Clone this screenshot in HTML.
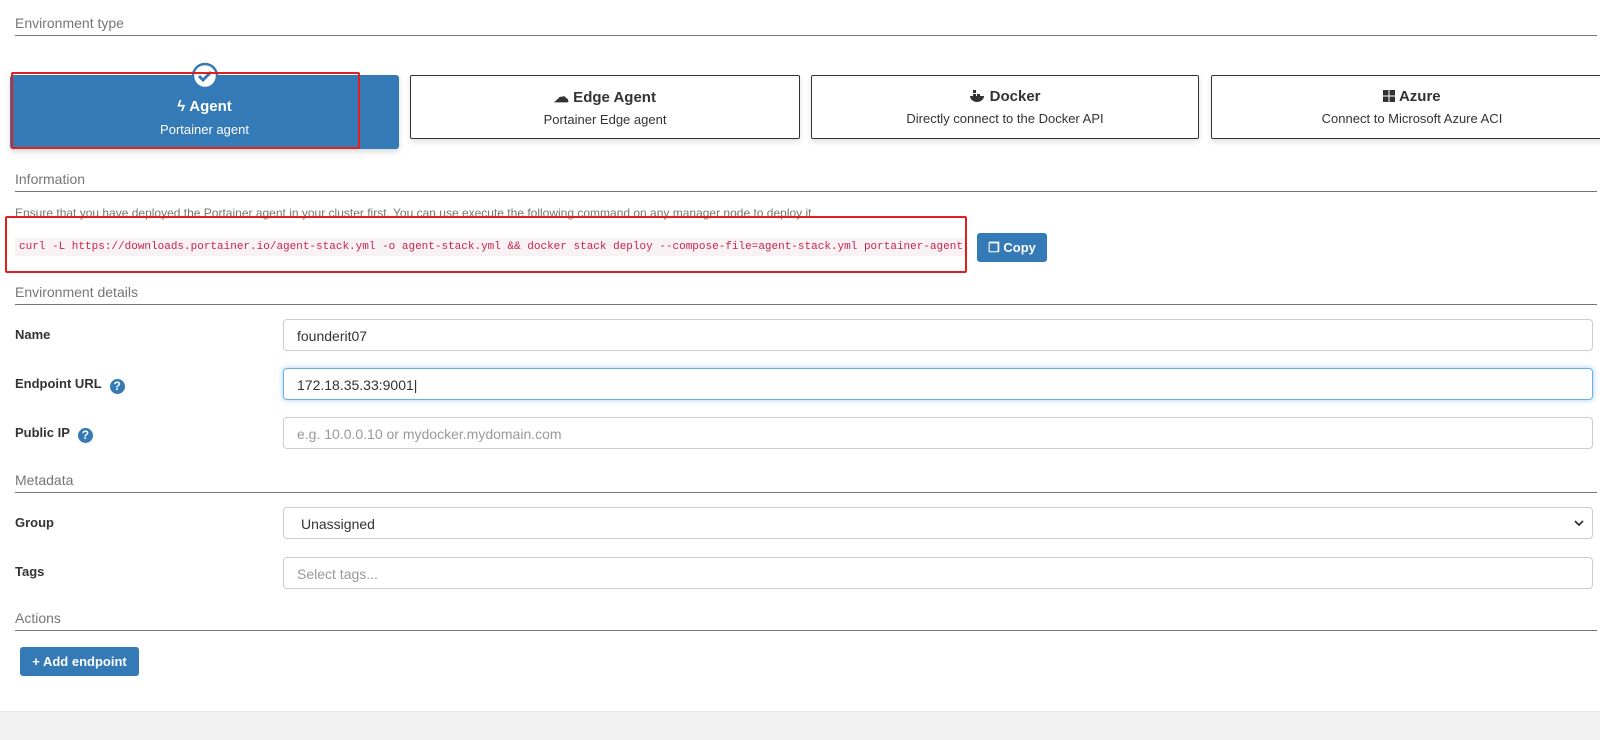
<!DOCTYPE html>
<html><head><meta charset="utf-8"><style>
body{margin:0;width:1600px;height:739px;background:#fff;font-family:"Liberation Sans",sans-serif;position:relative;overflow:hidden;color:#333}
.abs{position:absolute}
.sec{position:absolute;left:15px;right:3px;font-size:14px;color:#767676;border-bottom:1px solid #777;padding-bottom:4px}
.card{position:absolute;top:75px;height:62px;border:1px solid #333;border-radius:2px;background:#fff;text-align:center;box-shadow:0 3px 6px rgba(0,0,0,.12)}
.card b{display:block;margin-top:12px;font-size:15px;color:#333}
.card span{display:block;margin-top:6px;font-size:13px}
.lbl{position:absolute;left:15px;font-size:13px;font-weight:bold;color:#333}
.inp{position:absolute;left:283px;width:1310px;height:32px;border:1px solid #ccc;border-radius:4px;font-size:14px;line-height:32px;padding-left:13px;box-sizing:border-box}
.q{display:inline-block;width:15px;height:15px;border-radius:50%;background:#337ab7;color:#fff;font-size:12px;text-align:center;line-height:15px;margin-left:8px;vertical-align:-2px}
</style></head><body>
<div class="sec" style="top:15px">Environment type</div>

<div class="abs" style="left:10px;top:75px;width:389px;height:74px;background:#337ab7;border-radius:3px;color:#fff;text-align:center;box-shadow:0 3px 6px rgba(0,0,0,.15)">
<div style="margin-top:23px;font-size:15px;font-weight:bold">&#x03DF; Agent</div>
<div style="margin-top:7px;font-size:13px">Portainer agent</div></div>
<svg class="abs" style="left:191px;top:62px" width="28" height="28"><circle cx="14" cy="14" r="12" fill="#fff" stroke="#337ab7" stroke-width="2.5"/><path d="M8 14l4 4 8-8" fill="none" stroke="#337ab7" stroke-width="3"/></svg>
<div class="abs" style="left:11px;top:72px;width:345px;height:73px;border:2px solid #e02020;border-radius:2px"></div>

<div class="card" style="left:410px;width:388px"><b>☁ Edge Agent</b><span>Portainer Edge agent</span></div>
<div class="card" style="left:811px;width:386px"><b><svg width="16" height="13" viewBox="0 0 16 13" style="vertical-align:-1px"><rect x="4" y="1" width="3" height="3" fill="#333"/><rect x="4" y="5" width="3" height="3" fill="#333"/><rect x="8" y="5" width="3" height="3" fill="#333"/><path d="M1 7h14c0 3-3 6-7 6S1 10 1 7z" fill="#333"/></svg> Docker</b><span>Directly connect to the Docker API</span></div>
<div class="card" style="left:1211px;width:400px"><b><svg width="12" height="12" viewBox="0 0 12 12" style="vertical-align:-1px"><rect x="0" y="0" width="5.5" height="5.5" fill="#333"/><rect x="6.5" y="0" width="5.5" height="5.5" fill="#333"/><rect x="0" y="6.5" width="5.5" height="5.5" fill="#333"/><rect x="6.5" y="6.5" width="5.5" height="5.5" fill="#333"/></svg> Azure</b><span>Connect to Microsoft Azure ACI</span></div>

<div class="sec" style="top:171px">Information</div>
<div class="abs" style="left:15px;top:206px;font-size:12px;color:#767676">Ensure that you have deployed the Portainer agent in your cluster first. You can use execute the following command on any manager node to deploy it.</div>
<div class="abs" style="left:15px;top:238px;height:18px;line-height:18px;padding:0 4px;background:#f9f2f4;color:#c7254e;font-family:'Liberation Mono',monospace;font-size:11px;white-space:nowrap">curl -L https://downloads.portainer.io/agent-stack.yml -o agent-stack.yml &amp;&amp; docker stack deploy --compose-file=agent-stack.yml portainer-agent</div>
<div class="abs" style="left:5px;top:216px;width:958px;height:53px;border:2px solid #e02020;border-radius:2px"></div>
<div class="abs" style="left:977px;top:233px;width:70px;height:29px;background:#337ab7;border-radius:3px;color:#fff;font-size:13px;font-weight:bold;line-height:29px;text-align:center">❐ Copy</div>

<div class="sec" style="top:284px">Environment details</div>
<div class="lbl" style="top:327px">Name</div>
<div class="inp" style="top:319px">founderit07</div>
<div class="lbl" style="top:376px">Endpoint URL<span class="q">?</span></div>
<div class="inp" style="top:368px;border-color:#66afe9;box-shadow:0 0 6px rgba(102,175,233,.6)">172.18.35.33:9001|</div>
<div class="lbl" style="top:425px">Public IP<span class="q">?</span></div>
<div class="inp" style="top:417px;color:#999">e.g. 10.0.0.10 or mydocker.mydomain.com</div>
<div class="sec" style="top:472px">Metadata</div>
<div class="lbl" style="top:515px">Group</div>
<div class="inp" style="top:507px;padding-left:17px">Unassigned<svg style="position:absolute;right:8px;top:12px" width="10" height="7"><path d="M1 1l4 4 4-4" fill="none" stroke="#333" stroke-width="1.8"/></svg></div>
<div class="lbl" style="top:564px">Tags</div>
<div class="inp" style="top:557px;color:#999">Select tags...</div>
<div class="sec" style="top:610px">Actions</div>
<div class="abs" style="left:20px;top:647px;width:119px;height:29px;background:#337ab7;border-radius:3px;color:#fff;font-size:13px;font-weight:bold;line-height:29px;text-align:center">+ Add endpoint</div>
<div class="abs" style="left:0;top:711px;width:1600px;height:28px;background:#f2f2f2;border-top:1px solid #e6e6e6"></div>
</body></html>
